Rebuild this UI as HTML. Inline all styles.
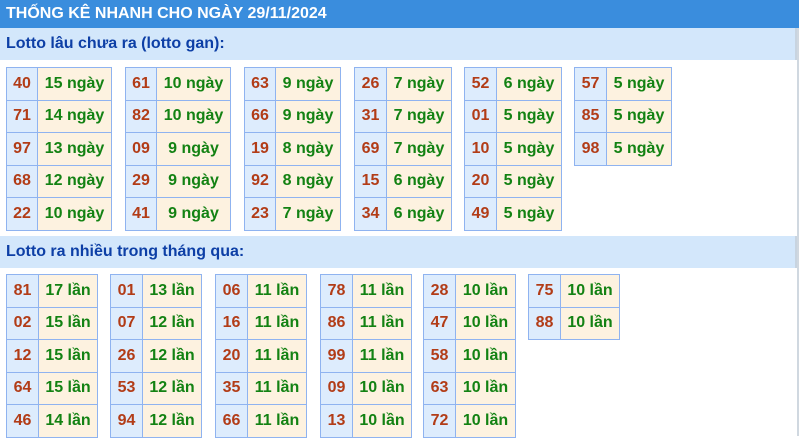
<!DOCTYPE html>
<html><head><meta charset="utf-8"><style>
*{margin:0;padding:0;box-sizing:border-box}
body{width:799px;height:436px;overflow:hidden;background:#fff;font-family:"Liberation Sans",Arial,sans-serif;position:relative}
.hd{position:absolute;left:0;top:0;width:799px;height:28px;background:#3a8ddd;color:#fff;font-weight:bold;font-size:16px;line-height:28px;padding-left:6px}
.sb{position:absolute;left:0;width:797px;height:32px;background:#d3e7fb;color:#0d3fa6;font-weight:bold;font-size:16px;line-height:32px;padding-left:6px;border-right:2px solid #c8d4e0}
.vl{position:absolute;left:797px;top:28px;width:2px;height:408px;background:#d0d8e0}
table{position:absolute;border-collapse:collapse;font-weight:bold;font-size:16px}
td{border:1px solid #8fb3f0;height:32.5px;text-align:center;padding:0}
td.n{background:#ddecfd;color:#b23c17}
td.v{background:#fdf2e0;color:#138213}
</style></head><body>
<div class="hd">THỐNG KÊ NHANH CHO NGÀY 29/11/2024</div>
<div class="vl"></div>
<div class="sb" style="top:28px">Lotto lâu chưa ra (lotto gan):</div>
<div class="sb" style="top:236px">Lotto ra nhiều trong tháng qua:</div>

<table style="left:6px;top:67px;width:106px"><colgroup><col style="width:31px"><col></colgroup>
<tr><td class="n">40</td><td class="v">15 ngày</td></tr><tr><td class="n">71</td><td class="v">14 ngày</td></tr><tr><td class="n">97</td><td class="v">13 ngày</td></tr><tr><td class="n">68</td><td class="v">12 ngày</td></tr><tr><td class="n">22</td><td class="v">10 ngày</td></tr></table>
<table style="left:125px;top:67px;width:106px"><colgroup><col style="width:31px"><col></colgroup>
<tr><td class="n">61</td><td class="v">10 ngày</td></tr><tr><td class="n">82</td><td class="v">10 ngày</td></tr><tr><td class="n">09</td><td class="v">9 ngày</td></tr><tr><td class="n">29</td><td class="v">9 ngày</td></tr><tr><td class="n">41</td><td class="v">9 ngày</td></tr></table>
<table style="left:244px;top:67px;width:97px"><colgroup><col style="width:31px"><col></colgroup>
<tr><td class="n">63</td><td class="v">9 ngày</td></tr><tr><td class="n">66</td><td class="v">9 ngày</td></tr><tr><td class="n">19</td><td class="v">8 ngày</td></tr><tr><td class="n">92</td><td class="v">8 ngày</td></tr><tr><td class="n">23</td><td class="v">7 ngày</td></tr></table>
<table style="left:354px;top:67px;width:98px"><colgroup><col style="width:32px"><col></colgroup>
<tr><td class="n">26</td><td class="v">7 ngày</td></tr><tr><td class="n">31</td><td class="v">7 ngày</td></tr><tr><td class="n">69</td><td class="v">7 ngày</td></tr><tr><td class="n">15</td><td class="v">6 ngày</td></tr><tr><td class="n">34</td><td class="v">6 ngày</td></tr></table>
<table style="left:464px;top:67px;width:98px"><colgroup><col style="width:32px"><col></colgroup>
<tr><td class="n">52</td><td class="v">6 ngày</td></tr><tr><td class="n">01</td><td class="v">5 ngày</td></tr><tr><td class="n">10</td><td class="v">5 ngày</td></tr><tr><td class="n">20</td><td class="v">5 ngày</td></tr><tr><td class="n">49</td><td class="v">5 ngày</td></tr></table>
<table style="left:574px;top:67px;width:98px"><colgroup><col style="width:32px"><col></colgroup>
<tr><td class="n">57</td><td class="v">5 ngày</td></tr><tr><td class="n">85</td><td class="v">5 ngày</td></tr><tr><td class="n">98</td><td class="v">5 ngày</td></tr></table>

<table style="left:6px;top:274px;width:92px"><colgroup><col style="width:32px"><col></colgroup>
<tr><td class="n">81</td><td class="v">17 lần</td></tr><tr><td class="n">02</td><td class="v">15 lần</td></tr><tr><td class="n">12</td><td class="v">15 lần</td></tr><tr><td class="n">64</td><td class="v">15 lần</td></tr><tr><td class="n">46</td><td class="v">14 lần</td></tr></table>
<table style="left:110px;top:274px;width:92px"><colgroup><col style="width:32px"><col></colgroup>
<tr><td class="n">01</td><td class="v">13 lần</td></tr><tr><td class="n">07</td><td class="v">12 lần</td></tr><tr><td class="n">26</td><td class="v">12 lần</td></tr><tr><td class="n">53</td><td class="v">12 lần</td></tr><tr><td class="n">94</td><td class="v">12 lần</td></tr></table>
<table style="left:215px;top:274px;width:92px"><colgroup><col style="width:32px"><col></colgroup>
<tr><td class="n">06</td><td class="v">11 lần</td></tr><tr><td class="n">16</td><td class="v">11 lần</td></tr><tr><td class="n">20</td><td class="v">11 lần</td></tr><tr><td class="n">35</td><td class="v">11 lần</td></tr><tr><td class="n">66</td><td class="v">11 lần</td></tr></table>
<table style="left:320px;top:274px;width:92px"><colgroup><col style="width:32px"><col></colgroup>
<tr><td class="n">78</td><td class="v">11 lần</td></tr><tr><td class="n">86</td><td class="v">11 lần</td></tr><tr><td class="n">99</td><td class="v">11 lần</td></tr><tr><td class="n">09</td><td class="v">10 lần</td></tr><tr><td class="n">13</td><td class="v">10 lần</td></tr></table>
<table style="left:423px;top:274px;width:93px"><colgroup><col style="width:32px"><col></colgroup>
<tr><td class="n">28</td><td class="v">10 lần</td></tr><tr><td class="n">47</td><td class="v">10 lần</td></tr><tr><td class="n">58</td><td class="v">10 lần</td></tr><tr><td class="n">63</td><td class="v">10 lần</td></tr><tr><td class="n">72</td><td class="v">10 lần</td></tr></table>
<table style="left:528px;top:274px;width:92px"><colgroup><col style="width:32px"><col></colgroup>
<tr><td class="n">75</td><td class="v">10 lần</td></tr><tr><td class="n">88</td><td class="v">10 lần</td></tr></table>
</body></html>
